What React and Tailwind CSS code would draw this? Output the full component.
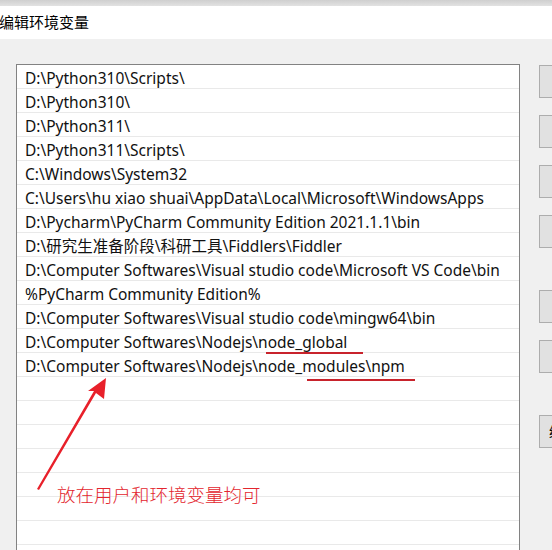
import React from "react";

const paths = [
  "D:\\Python310\\Scripts\\",
  "D:\\Python310\\",
  "D:\\Python311\\",
  "D:\\Python311\\Scripts\\",
  "C:\\Windows\\System32",
  "C:\\Users\\hu xiao shuai\\AppData\\Local\\Microsoft\\WindowsApps",
  "D:\\Pycharm\\PyCharm Community Edition 2021.1.1\\bin",
  "D:\\研究生准备阶段\\科研工具\\Fiddlers\\Fiddler",
  "D:\\Computer Softwares\\Visual studio code\\Microsoft VS Code\\bin",
  "%PyCharm Community Edition%",
  "D:\\Computer Softwares\\Visual studio code\\mingw64\\bin",
  "D:\\Computer Softwares\\Nodejs\\node_global",
  "D:\\Computer Softwares\\Nodejs\\node_modules\\npm",
];

const rows = [...paths, ...Array(8).fill("")];

const font = { fontFamily: '"Noto Sans", "Noto Sans CJK SC", sans-serif' };

const Btn = ({ className = "", children }) => (
  <div className={`h-[33px] w-[40px] shrink-0 border border-[#adadad] bg-[#e1e1e1] text-[14px] leading-[31px] pl-[9px] text-black ${className}`}>
    {children}
  </div>
);

const App = () => {
  return (
    <div className="relative w-[552px] h-[550px] overflow-hidden flex flex-col bg-[#f0f0f0]" style={font}>
      <div className="h-[6px] shrink-0 bg-gradient-to-b from-[#cfcfcf] to-[#e2e2e2]" />
      <div className="h-[33px] shrink-0 bg-white text-[15px] text-black leading-[32px] -ml-[1px]">
        编辑环境变量
      </div>

      <div className="flex-1 min-h-0 flex pt-[25px] pl-[16px]">
        <div className="w-[504px] shrink-0 border border-[#828282] bg-white h-[600px]">
          {rows.map((p, i) => (
            <div
              key={i}
              className="h-[24px] border-b border-[#e9e9e9] pl-[8px] text-[15.5px] leading-[26px] text-[#111] whitespace-nowrap"
            >
              {p}
            </div>
          ))}
        </div>

        <div className="flex flex-col ml-[19px] pt-[1px]">
          <Btn />
          <Btn className="mt-[17px]" />
          <Btn className="mt-[17px]" />
          <Btn className="mt-[17px]" />
          <Btn className="mt-[42px]" />
          <Btn className="mt-[17px]" />
          <Btn className="mt-[42px]">编</Btn>
        </div>
      </div>

      {/* red annotation overlay */}
      <svg className="absolute left-0 top-0 pointer-events-none" width="552" height="550">
        <rect x="266" y="352" width="97" height="2" fill="#c8232c" />
        <rect x="307" y="379" width="108" height="2" fill="#c8232c" />
        <polygon
          points="37,489 39,490 96,393 104,399 106,378 88,391 94,391"
          fill="#e8202a"
        />
      </svg>
      <div className="absolute left-[57px] top-[482px] text-[18.5px] leading-[24px] text-[#e3262e] whitespace-nowrap" style={{ fontFamily: '"Noto Sans CJK SC", sans-serif', fontWeight: 300 }}>
        放在用户和环境变量均可
      </div>
    </div>
  );
};

export default App;
